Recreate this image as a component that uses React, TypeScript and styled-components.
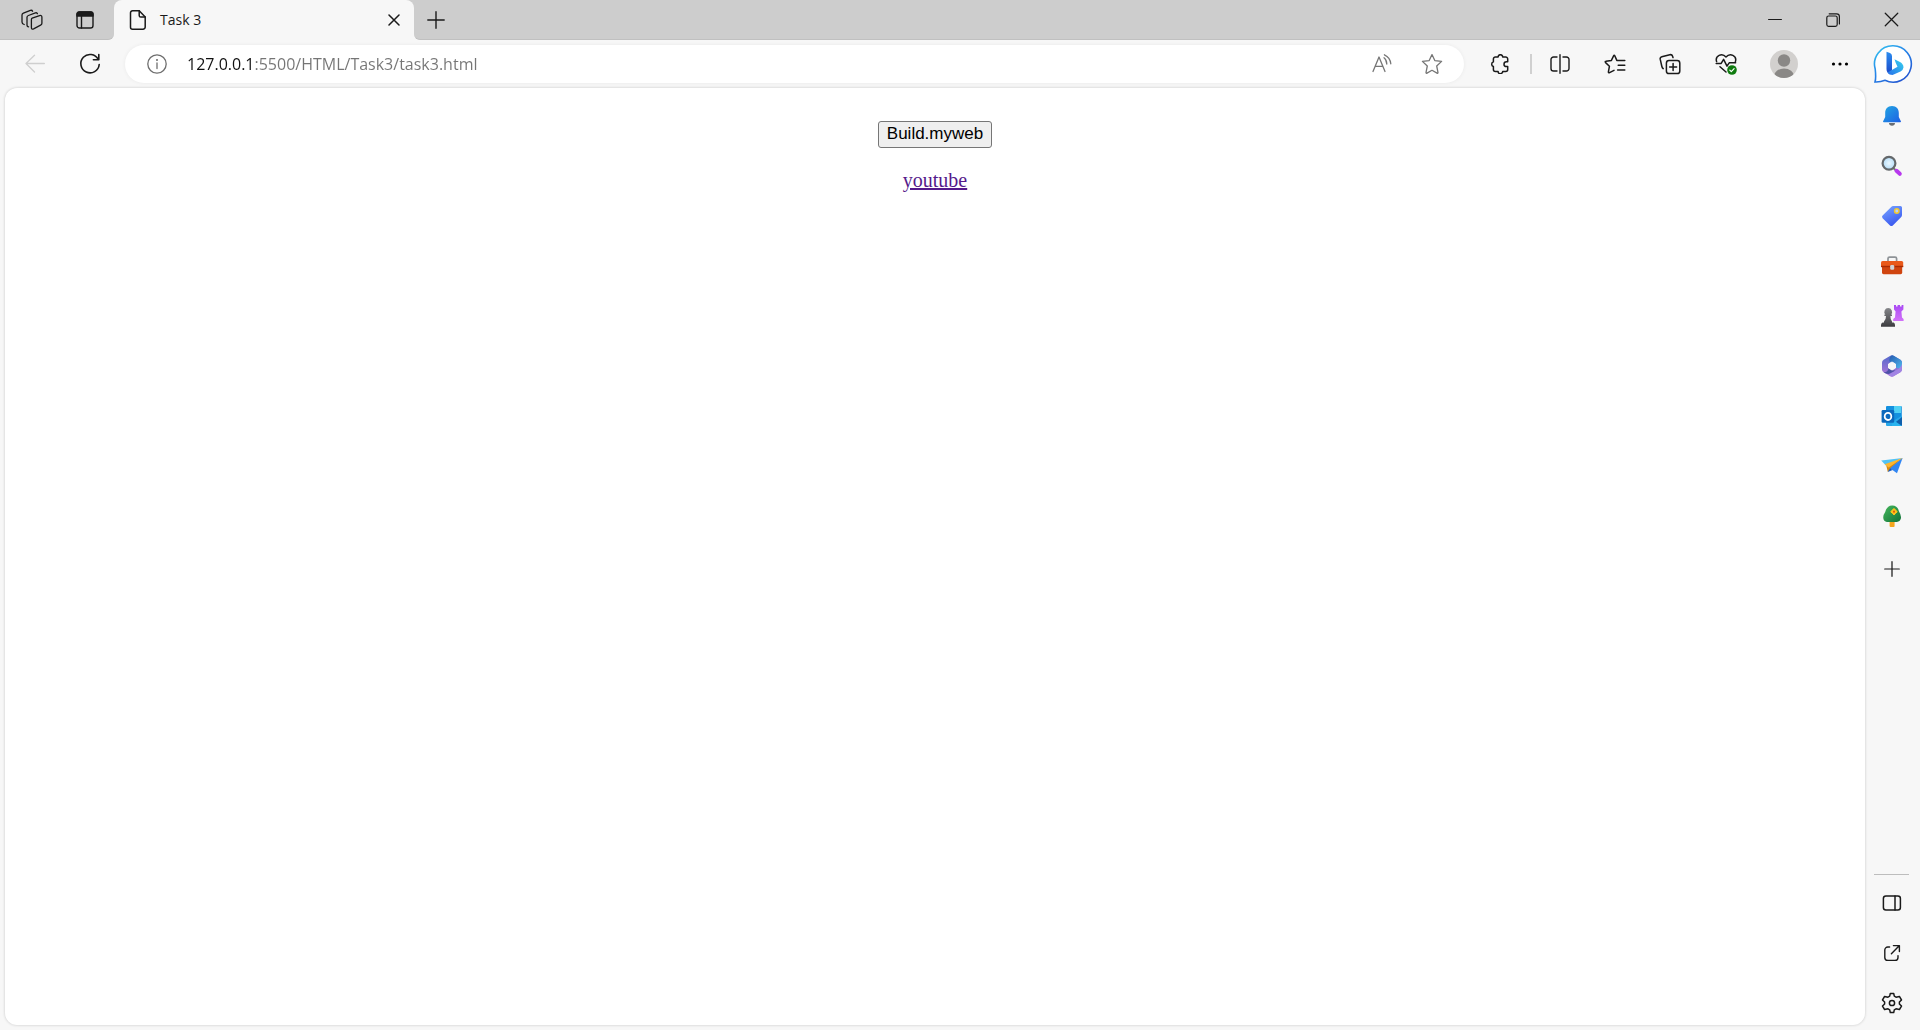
import React, { useState } from "react";
import styled, { createGlobalStyle } from "styled-components";

const GlobalStyle = createGlobalStyle`
  * { box-sizing: border-box; }
  body { margin: 0; background: #f7f7f7; }
  button { font: inherit; color: inherit; }
`;

const uiFont = `"Segoe UI", "Open Sans", "Noto Sans", sans-serif`;

const Browser = styled.div`
  display: flex;
  flex-direction: column;
  min-height: 100vh;
  background: #f7f7f7;
  color: #1a1a1a;
  font-family: ${uiFont};
`;

const TabBar = styled.header`
  display: flex;
  height: 40px;
  background: #f7f7f7;
`;

const TabBarStart = styled.div`
  display: flex;
  padding: 0 3px 0 5px;
  background: #cdcdcd;
  border-bottom: 1px solid #c0c0c0;
  border-bottom-right-radius: 6px;
`;

const TabBarEnd = styled.div`
  display: flex;
  flex: 1;
  justify-content: space-between;
  background: #cdcdcd;
  border-bottom: 1px solid #c0c0c0;
  border-bottom-left-radius: 6px;
`;

const TabCorners = styled.div`
  display: flex;
  background: #cdcdcd;
`;

const Tab = styled.div`
  display: flex;
  align-items: center;
  width: 300px;
  padding: 0 6px 0 14px;
  gap: 12px;
  background: #f7f7f7;
  border-radius: 8px 8px 0 0;
  font-size: 14px;
`;

const TabTitle = styled.span`
  flex: 1;
  padding-bottom: 2px;
`;

const IconButton = styled.button<{ $width?: number; $height?: number; $color?: string }>`
  display: flex;
  flex: none;
  align-items: center;
  justify-content: center;
  width: ${(p) => p.$width ?? 50}px;
  height: ${(p) => (p.$height ? `${p.$height}px` : "100%")};
  padding: 0;
  border: 0;
  background: transparent;
  color: ${(p) => p.$color ?? "#1a1a1a"};
`;

const WindowControls = styled.div`
  display: flex;
`;

const Toolbar = styled.nav`
  display: flex;
  align-items: center;
  height: 48px;
  padding-left: 10px;
`;

const NavButtons = styled.div`
  display: flex;
  height: 100%;
  gap: 5px;
  padding-right: 10px;
`;

const AddressBar = styled.div`
  display: flex;
  flex: 1;
  align-items: center;
  height: 38px;
  padding: 0 7px;
  border-radius: 19px;
  background: #fff;
  box-shadow: 0 0 4px rgba(0, 0, 0, 0.06);
`;

const UrlInput = styled.input`
  flex: 1;
  min-width: 0;
  height: 30px;
  padding: 0 0 0 5px;
  border: 0;
  outline: 0;
  font-family: ${uiFont};
  font-size: 16px;
  background: linear-gradient(to right, #111 73px, #757575 73px);
  background-clip: text;
  -webkit-background-clip: text;
  -webkit-text-fill-color: transparent;
`;

const ToolbarActions = styled.div`
  display: flex;
  align-items: center;
  height: 100%;
  padding-left: 6px;
`;

const Divider = styled.span`
  width: 2px;
  height: 20px;
  background: #d0d0d0;
`;

const Workspace = styled.div`
  display: flex;
  flex: 1;
  padding-left: 5px;
`;

const Page = styled.main`
  display: flex;
  flex: 1;
  flex-direction: column;
  align-items: center;
  gap: 20px;
  margin-bottom: 5px;
  padding-top: 33px;
  background: #fff;
  border-radius: 12px;
  box-shadow: 0 0 3px rgba(0, 0, 0, 0.2);
`;

const PageButton = styled.button`
  height: 27px;
  padding: 0 8px 2px;
  border: 1px solid #767676;
  border-radius: 3px;
  background: #efefef;
  color: #000;
  font-family: Arial, "Liberation Sans", sans-serif;
  font-size: 17px;
  line-height: 20px;
`;

const PageLink = styled.a`
  color: #551a8b;
  font-family: "Times New Roman", "Liberation Serif", serif;
  font-size: 20px;
  line-height: 24px;
`;

const Sidebar = styled.aside`
  display: flex;
  flex-direction: column;
  justify-content: space-between;
  align-items: center;
  width: 55px;
  padding: 3px 2px 2px 0;
`;

const SidebarGroup = styled.div`
  display: flex;
  flex-direction: column;
`;

const SidebarFooter = styled(SidebarGroup)`
  align-items: center;
`;

const SidebarRule = styled.hr`
  width: 35px;
  height: 1px;
  margin: 0 0 3px;
  border: 0;
  background: #bdbdbd;
`;

type IconProps = {
  size?: number;
  box?: number;
  stroke?: number;
  children: React.ReactNode;
};

const Line = ({ size = 20, box, stroke = 1.3, children }: IconProps) => (
  <svg
    width={size}
    height={size}
    viewBox={`0 0 ${box ?? size} ${box ?? size}`}
    fill="none"
    stroke="currentColor"
    strokeWidth={stroke}
    strokeLinecap="round"
    strokeLinejoin="round"
    aria-hidden="true"
  >
    {children}
  </svg>
);

const Art = ({ size = 22, box, children }: IconProps) => (
  <svg width={size} height={size} viewBox={`0 0 ${box ?? size} ${box ?? size}`} aria-hidden="true">
    {children}
  </svg>
);

const WorkspacesIcon = () => (
  <Line size={22}>
    <path d="M11.2 9.2 18.6 6.6Q20.9 6 20.9 8.2V14.2Q20.9 15.6 19.6 16.2L12.6 19.8Q10.4 20.8 10.4 18.4V10.6Q10.4 9.5 11.2 9.2Z" />
    <path d="M7.6 17.8Q6 17.8 6 16V8.3Q6 7 7.4 6.5L14.4 3.9Q16 3.4 16.4 4.7" />
    <path d="M3.2 15.5Q1 14.8 1 13V6Q1 4.8 2.4 4.2L9.4 1.4Q11 .9 11.6 2.2" />
  </Line>
);

const TabActionsIcon = () => (
  <Line size={18} stroke={1.4}>
    <rect x="1" y="1" width="16" height="16" rx="2.6" />
    <path d="M1 3.2A2.3 2.3 0 0 1 3.2 1H14.8A2.3 2.3 0 0 1 17 3.2V5H1Z" fill="currentColor" />
    <path d="M5.5 5V17" />
  </Line>
);

const FileIcon = () => (
  <Line size={20} stroke={1.5}>
    <path d="M4.5.8H11.2L17.2 7V17A2.2 2.2 0 0 1 15 19.2H4.5A2 2 0 0 1 2.5 17.2V2.8A2 2 0 0 1 4.5.8Z" />
    <path d="M11.2.8V5.4A1.6 1.6 0 0 0 12.8 7H17.2" />
  </Line>
);

const CloseIcon = ({ size = 12, stroke = 1.5 }) => (
  <Line size={size} box={12} stroke={stroke}>
    <path d="M1 1 11 11M11 1 1 11" />
  </Line>
);

const PlusIcon = ({ size = 18 }) => (
  <Line size={size} box={18} stroke={1.4}>
    <path d="M9 .8V17.2M.8 9H17.2" />
  </Line>
);

const MinimizeIcon = () => (
  <Line size={14} stroke={1.2}>
    <path d="M.6 6.5H13.4" />
  </Line>
);

const RestoreIcon = () => (
  <Line size={14} stroke={1.2}>
    <rect x=".8" y="3" width="10.4" height="10.4" rx="1.8" />
    <path d="M3.2.8H10.6A2.8 2.8 0 0 1 13.4 3.6V11" />
  </Line>
);

const BackIcon = () => (
  <Line size={20}>
    <path d="M19.4 9.5H1M9.5 1.2 1 9.5 9.5 18" />
  </Line>
);

const ReloadIcon = () => (
  <Line size={22} stroke={1.6}>
    <path d="M19.2 6.4A9.2 9.2 0 1 0 20.2 11.5M19.8 1.5V6.8H14.4" />
  </Line>
);

const InfoIcon = () => (
  <Line size={20}>
    <circle cx="10" cy="10" r="9.2" />
    <path d="M10 9V14.6" />
    <circle cx="10" cy="6" r=".4" fill="currentColor" />
  </Line>
);

const ReadAloudIcon = () => (
  <Line size={20}>
    <path d="M1 17.5 7 3 13 17.5M3.2 12.4H10.8" />
    <path d="M12 3.8Q14.6 5.6 14.8 10M12.4.8Q18.2 3.4 18.8 9.8" />
  </Line>
);

const StarIcon = () => (
  <Line size={22}>
    <path d="M11 1.6 13.8 7.6 20.6 8.4 15.7 13 17 19.6Q17 20.6 16 20.1L11 17.3 6 20.1Q5 20.6 5 19.6L6.3 13 1.4 8.4 8.2 7.6Z" />
  </Line>
);

const PuzzleIcon = () => (
  <Line size={20} stroke={1.5}>
    <path d="M5.4 3H8.1A2.3 2.3 0 0 1 12.7 3H15.5A2 2 0 0 1 17.7 5V7.8H16.4A2.4 2.4 0 0 0 16.4 12.6H17.7V15.4A2 2 0 0 1 15.7 17.4H12.7A2.3 2.3 0 0 1 8.1 17.4H5.4A2 2 0 0 1 3.4 15.4V12.5A2.4 2.4 0 0 1 3.4 7.9V5A2 2 0 0 1 5.4 3Z" />
  </Line>
);

const SplitIcon = () => (
  <Line size={20} stroke={1.4}>
    <path d="M10 .7V19.3M7 3H3.6A2.6 2.6 0 0 0 1 5.6V14.4A2.6 2.6 0 0 0 3.6 17H7M13 3H16.4A2.6 2.6 0 0 1 19 5.6V14.4A2.6 2.6 0 0 1 16.4 17H13" />
  </Line>
);

const FavoritesIcon = () => (
  <Line size={22} stroke={1.5}>
    <path d="M12.8 7.4 10.8 2.8Q10.2 1.6 9.6 2.8L7.4 7.4 2 8.3Q.6 8.5 1.6 9.6L5.4 13.3 4.4 18.8Q4.3 20.2 5.6 19.6L10 17.3M12.8 7.4H20.8M14.2 12.2H20.8M13.6 17H20.8" />
  </Line>
);

const CollectionsIcon = () => (
  <Line size={22} stroke={1.5}>
    <rect x="7.4" y="7.6" width="13.4" height="13" rx="2.6" />
    <path d="M14.1 10.6V17.6M10.6 14.1H17.6M4.2 15.6Q3.2 14.8 2.8 13.2L1.2 6.2Q.8 4.2 2.8 3.7L10.8 1.7Q13 1.3 13.6 3.2L14 4.6" />
  </Line>
);

const HealthIcon = () => (
  <Line size={22} stroke={1.5}>
    <path d="M1.6 8.6C-.2 2.6 7-.6 11 4 15-.6 22.2 2.6 20.4 8.6M1.2 10.4H6.2L8.6 6.4 12 13.2 14.2 9.8H20.6M5 13.8 11 19" />
    <circle cx="17" cy="17" r="4.8" fill="#0f7b0f" stroke="none" />
    <path d="M14.8 17.1 16.3 18.6 19.1 15.7" stroke="#fff" strokeWidth="1.2" />
  </Line>
);

const Avatar = () => (
  <Art size={28}>
    <defs>
      <clipPath id="avatar-clip">
        <circle cx="14" cy="14" r="14" />
      </clipPath>
    </defs>
    <g clipPath="url(#avatar-clip)">
      <rect width="28" height="28" fill="#d2d0ce" />
      <circle cx="14" cy="10.5" r="6.2" fill="#8a8886" />
      <ellipse cx="14" cy="26" rx="10" ry="7.6" fill="#8a8886" />
    </g>
  </Art>
);

const MoreIcon = () => (
  <Art size={18}>
    <circle cx="2.5" cy="9" r="1.6" />
    <circle cx="9" cy="9" r="1.6" />
    <circle cx="15.5" cy="9" r="1.6" />
  </Art>
);

const BingIcon = () => (
  <Art size={40}>
    <defs>
      <linearGradient id="bing-ring" x1="0" y1="0" x2=".8" y2="1">
        <stop offset="0" stopColor="#35c7f0" />
        <stop offset=".5" stopColor="#2583e8" />
        <stop offset="1" stopColor="#2353cf" />
      </linearGradient>
      <linearGradient id="bing-stem" x1="0" y1="0" x2="0" y2="1">
        <stop offset="0" stopColor="#2b8df0" />
        <stop offset="1" stopColor="#1b48c8" />
      </linearGradient>
      <linearGradient id="bing-bowl" x1="1" y1="0" x2="0" y2="1">
        <stop offset="0" stopColor="#37d3ee" />
        <stop offset="1" stopColor="#2670ea" />
      </linearGradient>
    </defs>
    <path
      d="M20 1.8A18.2 18.2 0 1 1 12 36.3Q7.5 38.2 2 38Q3.2 34 2.2 25A18.2 18.2 0 0 1 20 1.8Z"
      fill="#fff"
      stroke="url(#bing-ring)"
      strokeWidth="1.6"
    />
    <path d="M13.5 7.8 17 9Q19 9.8 19 12V26.5L16.5 30Q13.5 28.5 13.5 25Z" fill="url(#bing-stem)" />
    <path d="M21.5 15.2 27 18Q30.5 20 30.5 23.5 30.2 26 27.5 27.5L19.5 31Q16 31 14.5 28.5L24.5 22.8 22.6 18.6Z" fill="url(#bing-bowl)" />
  </Art>
);

const BellIcon = () => (
  <Art>
    <defs>
      <linearGradient id="bell" x1="0" y1="0" x2="1" y2="1">
        <stop stopColor="#22a7e2" />
        <stop offset="1" stopColor="#1d5fe4" />
      </linearGradient>
    </defs>
    <path d="M8 18H14Q13.8 20.8 11 20.8T8 18Z" fill="#686d73" />
    <path d="M11 1C6.5 1 4.2 4.2 4.2 8V12L2 16.6Q2 17.2 2.8 17.2H19.2Q20 17.2 20 16.6L17.8 12V8C17.8 4.2 15.5 1 11 1Z" fill="url(#bell)" />
  </Art>
);

const SearchIcon = () => (
  <Art>
    <defs>
      <radialGradient id="lens">
        <stop stopColor="#eaf7ff" />
        <stop offset="1" stopColor="#b3dcf7" />
      </radialGradient>
    </defs>
    <path d="M12 12.8 15.6 16" stroke="#77777a" strokeWidth="2" />
    <circle cx="8" cy="8.2" r="6.4" fill="url(#lens)" stroke="#64686b" strokeWidth="2.2" />
    <path d="M15.5 15.8 18.8 18.8" stroke="#b838ee" strokeWidth="4" strokeLinecap="round" />
  </Art>
);

const TagIcon = () => (
  <Art>
    <defs>
      <linearGradient id="tag" x1=".2" y1="0" x2=".7" y2="1">
        <stop stopColor="#75a2ff" />
        <stop offset="1" stopColor="#3653ee" />
      </linearGradient>
    </defs>
    <path d="M12.2 1H19.4Q21 1 21 2.6V10Q21 11.2 20 12.2L11.8 20.4Q10.4 21.6 9 20.4L1.6 13.2Q.4 11.8 1.6 10.6L10.2 1.9Q11 1 12.2 1Z" fill="url(#tag)" />
    <circle cx="15.8" cy="6" r="2.2" fill="#b9d2ff" stroke="#f3c82c" strokeWidth="1.5" />
  </Art>
);

const ToolboxIcon = () => (
  <Art size={24}>
    <path d="M8 7.4V4.6Q8 3.2 9.6 3.2H15Q16.6 3.2 16.6 4.6V7.4" fill="none" stroke="#8e9397" strokeWidth="1.7" />
    <path d="M1 8.6Q1 7 2.6 7H21.6Q23.2 7 23.2 8.6V13H1Z" fill="#e9591a" />
    <path d="M2 12.6H22.2V18.6Q22.2 20.2 20.6 20.2H3.6Q2 20.2 2 18.6Z" fill="#d04510" />
    <path d="M1 11.8H23.2V13.2H1Z" fill="#a92b04" />
    <rect x="10.2" y="11" width="4" height="4.8" rx="1.2" fill="#cfd4d8" />
  </Art>
);

const GamesIcon = () => (
  <Art size={24}>
    <defs>
      <linearGradient id="rook" x1="0" y1="0" x2="0" y2="1">
        <stop stopColor="#a94af4" />
        <stop offset="1" stopColor="#d272f8" />
      </linearGradient>
      <linearGradient id="pawn" x1="0" y1="0" x2="0" y2="1">
        <stop stopColor="#85868a" />
        <stop offset="1" stopColor="#3c3c3f" />
      </linearGradient>
    </defs>
    <path d="M14 1H16V2.4H17.6V1H20V2.4H21.6V1H23.4V5.6L21.4 7.6 22 13.4 23.6 15V17H13.2V15L15 13.4 15.6 7.6 14 5.6Z" fill="url(#rook)" />
    <path d="M8.2 4A3.9 3.9 0 0 1 11 10.6H12V12H10.4Q10.4 16 12 17.4V18.6H13.6Q15 19.2 15 21V22.8H1V21Q1 19.2 2.6 18.6H4V17.4Q6 16 6 12H4.4V10.6H5.4A3.9 3.9 0 0 1 8.2 4Z" fill="url(#pawn)" />
  </Art>
);

const MicrosoftIcon = () => (
  <Art>
    <defs>
      <linearGradient id="m-left" x1="0" y1="0" x2="0" y2="1">
        <stop stopColor="#5368cc" />
        <stop offset="1" stopColor="#b477d8" />
      </linearGradient>
      <linearGradient id="m-right" x1="0" y1="0" x2="1" y2="1">
        <stop stopColor="#235aae" />
        <stop offset="1" stopColor="#51b8ef" />
      </linearGradient>
    </defs>
    <path d="M9.4.8Q11-.1 12.6.8L19.4 4.8Q21 5.8 21 7.6V14.4Q21 16.2 19.4 17.2L12.6 21.2Q11 22.1 9.4 21.2L2.6 17.2Q1 16.2 1 14.4V7.6Q1 5.8 2.6 4.8Z" fill="url(#m-left)" />
    <path d="M12.6.8 19.4 4.8Q21 5.8 21 7.6V10Q20.6 13 17 13.4L14.6 12V8.8L8.4 6.4Q7.8 2.4 11 .2Q11.8.3 12.6.8Z" fill="url(#m-right)" />
    <path d="M21 9V14.4Q21 16.2 19.4 17.2L12.6 21.2Q11 22.1 9.4 21.2L7 19.8 18 13.4Q20.6 11.6 21 9Z" fill="#a184e4" />
    <path d="M2.6 17.2Q7.4 17.4 7.8 12L11 15.2 14.4 15.5 9 18.6Q6 19.6 2.6 17.2Z" fill="#4d52a7" />
    <path d="M11 7 14.5 9V13L11 15 7.5 13V9Z" fill="#f7f7f7" stroke="#f7f7f7" strokeLinejoin="round" />
  </Art>
);

const OutlookIcon = () => (
  <Art>
    <rect x="5" y="1" width="15.8" height="16" rx="1" fill="#1490df" />
    <path d="M13 1H20V8H13Z" fill="#50d0f4" />
    <path d="M5 11 13 15.5 21 10.5V20Q21 21 20 21H6Q5 21 5 20Z" fill="#28a8ea" />
    <path d="M10 21 21 12V20Q21 21 20 21Z" fill="#0f5fac" />
    <path d="M13 15.5 21 21H10Z" fill="#29b4ef" />
    <rect x=".6" y="5" width="12.6" height="12.8" rx="1.2" fill="#0b69bd" />
    <ellipse cx="7" cy="11.4" rx="3.3" ry="3.6" fill="none" stroke="#fff" strokeWidth="1.8" />
  </Art>
);

const SendIcon = () => (
  <Art>
    <path d="M.2 5.4 21.6 3 5.6 11.2Z" fill="#51c2f5" />
    <path d="M21.6 3 5.4 11 6.8 17 10.4 13.2Z" fill="#d78b12" />
    <path d="M3.6 9.2 21.6 3 7.6 12.4Z" fill="#ffb62e" />
    <path d="M21.6 3 16 18.2 9 13.2Z" fill="#3186f3" />
    <path d="M6.8 17 9 13.2 11.6 15Z" fill="#175cc4" />
  </Art>
);

const TreeIcon = () => (
  <Art>
    <defs>
      <linearGradient id="tree" x1="0" y1="0" x2="1" y2="1">
        <stop stopColor="#46b85c" />
        <stop offset="1" stopColor="#117239" />
      </linearGradient>
    </defs>
    <rect x="8.6" y="15" width="5" height="7" rx="1" fill="#f4a51e" />
    <path d="M11 .4Q16.4.2 17.8 6 21.4 12 19.2 15 18 17 14 17H7.6Q3.8 17 2.6 14.4 1.4 11 4.2 7 5.8.6 11 .4Z" fill="url(#tree)" />
    <path d="M13 3.4 14.6 5.1 16.3 6.7 14.6 8.3 13 10 11.4 8.3 9.7 6.7 11.4 5.1Z" fill="#ffc51b" stroke="#ffc51b" strokeLinejoin="round" />
    <circle cx="13" cy="6.7" r="1.1" fill="#da5a10" />
  </Art>
);

const PanelIcon = () => (
  <Line size={20} stroke={1.5}>
    <rect x="1.4" y="3" width="17" height="14" rx="2.5" />
    <path d="M13 3V17" />
  </Line>
);

const ExternalIcon = () => (
  <Line size={18} stroke={1.4}>
    <path d="M6.6 3H4.8A3 3 0 0 0 1.8 6V13.4A3 3 0 0 0 4.8 16.4H12A3 3 0 0 0 15 13.4V11.6M10.4 1.6H16.4V7.6M16.2 1.8 8.4 9.8" />
  </Line>
);

const GearIcon = () => (
  <Line size={22} stroke={1.5}>
    <path d="M9.3 1.4H12.7L13.3 4.2 15 5.2 18.4 4.4 20.5 8 18.4 10V12L20.5 14 18.4 17.6 15 16.8 13.3 17.8 12.7 20.6H9.3L8.7 17.8 7 16.8 3.6 17.6 1.5 14 3.6 12V10L1.5 8 3.6 4.4 7 5.2 8.7 4.2Z" />
    <circle cx="11" cy="11" r="2.6" />
  </Line>
);

const sidebarApps = [
  { label: "Notifications", Icon: BellIcon },
  { label: "Search", Icon: SearchIcon },
  { label: "Shopping", Icon: TagIcon },
  { label: "Tools", Icon: ToolboxIcon },
  { label: "Games", Icon: GamesIcon },
  { label: "Microsoft 365", Icon: MicrosoftIcon },
  { label: "Outlook", Icon: OutlookIcon },
  { label: "Drop", Icon: SendIcon },
  { label: "E-tree", Icon: TreeIcon },
];

const sidebarTools = [
  { label: "Hide sidebar", Icon: PanelIcon },
  { label: "Open link", Icon: ExternalIcon },
  { label: "Settings", Icon: GearIcon },
];

export default function App() {
  const [url, setUrl] = useState("127.0.0.1:5500/HTML/Task3/task3.html");

  return (
    <Browser>
      <GlobalStyle />
      <TabBar>
        <TabBarStart>
          <IconButton $width={53} aria-label="Workspaces"><WorkspacesIcon /></IconButton>
          <IconButton $width={53} aria-label="Tab actions"><TabActionsIcon /></IconButton>
        </TabBarStart>
        <TabCorners>
          <Tab>
            <FileIcon />
            <TabTitle>Task 3</TabTitle>
            <IconButton $width={28} $height={28} aria-label="Close tab"><CloseIcon /></IconButton>
          </Tab>
        </TabCorners>
        <TabBarEnd>
          <IconButton $width={44} aria-label="New tab"><PlusIcon /></IconButton>
          <WindowControls>
            <IconButton $width={58} aria-label="Minimize"><MinimizeIcon /></IconButton>
            <IconButton $width={58} aria-label="Restore"><RestoreIcon /></IconButton>
            <IconButton $width={58} aria-label="Close window"><CloseIcon size={15} stroke={1} /></IconButton>
          </WindowControls>
        </TabBarEnd>
      </TabBar>

      <Toolbar>
        <NavButtons>
          <IconButton $color="#cfcfcf" aria-label="Back"><BackIcon /></IconButton>
          <IconButton aria-label="Reload"><ReloadIcon /></IconButton>
        </NavButtons>
        <AddressBar>
          <IconButton $color="#6e6e6e" aria-label="Site information"><InfoIcon /></IconButton>
          <UrlInput aria-label="Address" value={url} onChange={(e) => setUrl(e.target.value)} spellCheck={false} />
          <IconButton $color="#767676" aria-label="Read aloud"><ReadAloudIcon /></IconButton>
          <IconButton $color="#767676" aria-label="Add to favorites"><StarIcon /></IconButton>
        </AddressBar>
        <ToolbarActions>
          <IconButton $width={60} aria-label="Extensions"><PuzzleIcon /></IconButton>
          <Divider />
          <IconButton $width={55} aria-label="Split screen"><SplitIcon /></IconButton>
          <IconButton $width={55} aria-label="Favorites"><FavoritesIcon /></IconButton>
          <IconButton $width={56} aria-label="Collections"><CollectionsIcon /></IconButton>
          <IconButton $width={56} aria-label="Browser essentials"><HealthIcon /></IconButton>
          <IconButton $width={59} aria-label="Profile"><Avatar /></IconButton>
          <IconButton $width={53} aria-label="More"><MoreIcon /></IconButton>
          <IconButton $width={54} aria-label="Bing"><BingIcon /></IconButton>
        </ToolbarActions>
      </Toolbar>

      <Workspace>
        <Page>
          <PageButton>Build.myweb</PageButton>
          <PageLink href="#youtube">youtube</PageLink>
        </Page>
        <Sidebar>
          <SidebarGroup>
            {sidebarApps.map(({ label, Icon }) => (
              <IconButton key={label} $height={50} aria-label={label}><Icon /></IconButton>
            ))}
            <IconButton $height={56} aria-label="Customize sidebar"><PlusIcon size={16} /></IconButton>
          </SidebarGroup>
          <SidebarFooter>
            <SidebarRule />
            {sidebarTools.map(({ label, Icon }) => (
              <IconButton key={label} $height={50} aria-label={label}><Icon /></IconButton>
            ))}
          </SidebarFooter>
        </Sidebar>
      </Workspace>
    </Browser>
  );
}
